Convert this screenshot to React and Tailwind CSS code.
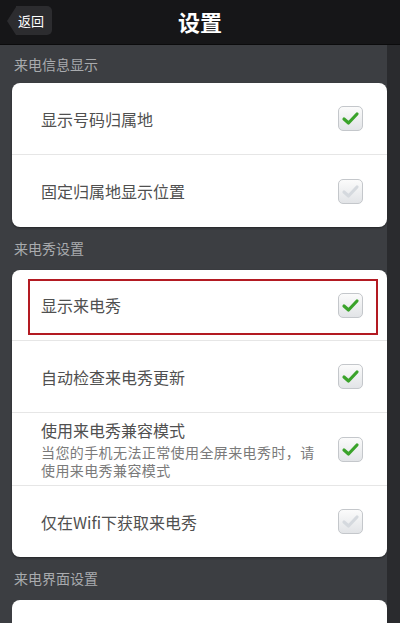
import React from "react";

const Check = ({ on }) => (
  <div className="w-[25px] h-[25px] rounded-[5px] border-[1.5px] border-[#c4c7cb] bg-gradient-to-b from-[#fbfbfb] to-[#e2e4e7] flex items-center justify-center shrink-0">
    <svg width="19" height="19" viewBox="0 0 19 19">
      <path
        d="M3 10 L7.5 14 L16 5"
        fill="none"
        stroke={on ? "#3aa32a" : "#d5d9de"}
        strokeWidth="3.2"
        strokeLinecap="round"
        strokeLinejoin="round"
      />
    </svg>
  </div>
);

const Row = ({ title, desc, on, h, border = true, children }) => (
  <div
    className={`relative flex items-center pl-[29px] pr-[24px] ${h} ${border ? "border-b border-[#e6e6e6]" : ""}`}
  >
    <div className="flex-1">
      <div className="text-[16px] leading-[20px] text-[#505050]">{title}</div>
      {desc && (
        <div className="mt-[3px] w-[280px] text-[14px] leading-[18px] tracking-[0.4px] text-[#7a7a7a]">{desc}</div>
      )}
    </div>
    <Check on={on} />
    {children}
  </div>
);

const Label = ({ children, h }) => (
  <div className={`${h} flex items-center pl-[2px] text-[14px] text-[#a9abae]`}>{children}</div>
);

export default function App() {
  return (
    <div
      className="w-[400px] h-[623px] overflow-hidden bg-[#3c3e42] flex flex-col"
      style={{ fontFamily: '"Noto Sans CJK SC", "Noto Sans", sans-serif' }}
    >
      <div className="h-[45px] shrink-0 bg-[#161618] border-b border-[#0b0b0c] relative flex items-center justify-center">
        <div className="absolute left-[7px] top-[6px] flex items-center">
          <div className="w-0 h-0 border-y-[14.5px] border-y-transparent border-r-[9px] border-r-[#2c2c2f]" />
          <div className="h-[29px] pl-[2px] pr-[8px] bg-[#2c2c2f] rounded-r-[5px] flex items-center text-[13px] text-white">
            返回
          </div>
        </div>
        <div className="text-[22px] font-bold text-white -mt-[2px]">设置</div>
      </div>

      <div className="flex flex-1">
        <div className="flex-1 pl-[12px]">
          <Label h="h-[38px]">来电信息显示</Label>
          <div className="bg-white rounded-[8px] shadow-[0_1px_2px_rgba(0,0,0,0.4)]">
            <Row title="显示号码归属地" on h="h-[72px]" />
            <Row title="固定归属地显示位置" h="h-[72px]" border={false} />
          </div>

          <Label h="h-[43px]">来电秀设置</Label>
          <div className="bg-white rounded-[8px] shadow-[0_1px_2px_rgba(0,0,0,0.4)]">
            <Row title="显示来电秀" on h="h-[71px]">
              <div className="absolute left-[16px] right-[9px] top-[9px] bottom-[5px] border-2 border-[#b31a22]" />
            </Row>
            <Row title="自动检查来电秀更新" on h="h-[72px]" />
            <Row
              title="使用来电秀兼容模式"
              desc="当您的手机无法正常使用全屏来电秀时，请使用来电秀兼容模式"
              on
              h="h-[73px]"
            />
            <Row title="仅在Wifi下获取来电秀" h="h-[71px]" border={false} />
          </div>

          <Label h="h-[43px]">来电界面设置</Label>
          <div className="bg-white rounded-t-[8px] h-[40px]" />
        </div>
        <div className="w-[13px] bg-[#2a2b2e]" />
      </div>
    </div>
  );
}
